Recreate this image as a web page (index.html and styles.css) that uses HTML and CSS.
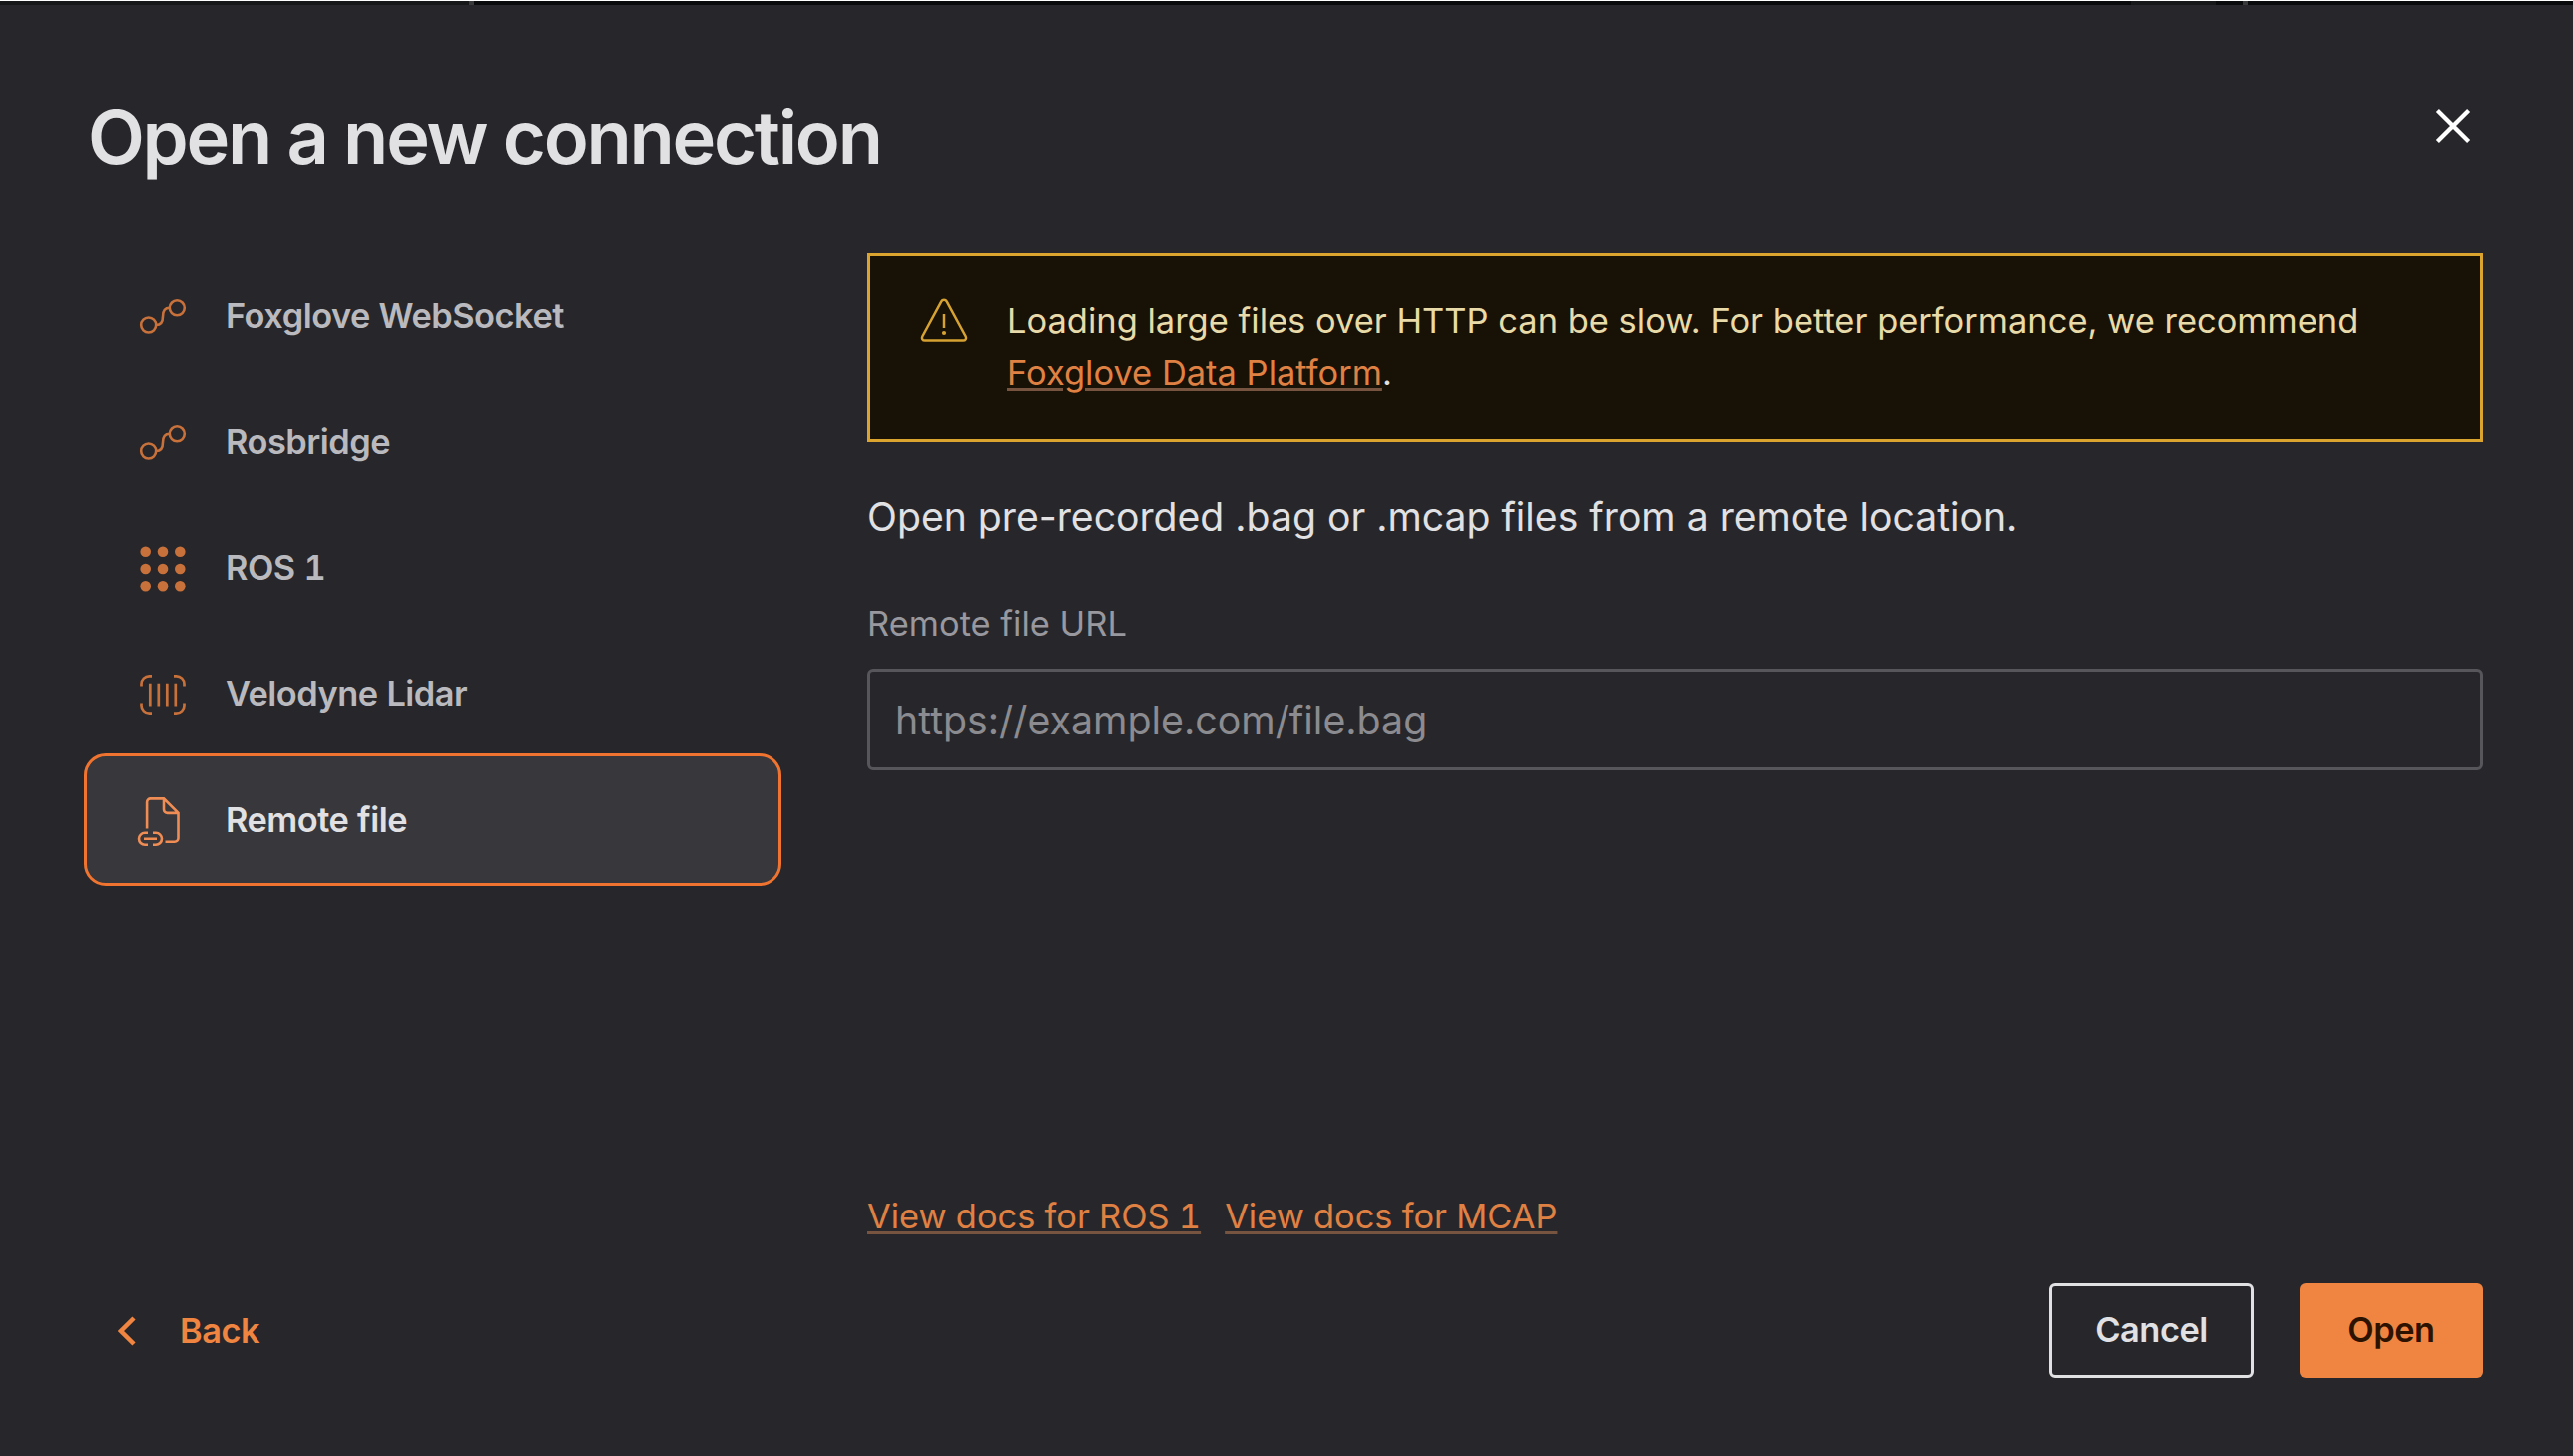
FILE: index.html
```html
<!DOCTYPE html>
<html lang="en">
<head>
<meta charset="utf-8">
<title>Open a new connection</title>
<link rel="stylesheet" href="styles.css">
</head>
<body>
<div class="backdrop"><span class="pane pane-left"></span><span class="pane pane-main"></span><span class="pane pane-tab"></span><span class="pane pane-gap"></span><span class="pane pane-right"></span></div>
<main class="dialog">
  <header class="header">
    <h1 class="title">Open a new connection</h1>
    <button class="close" aria-label="Close"><svg width="36" height="36" viewBox="0 0 36 36"><path d="M2.400 2.400 33.600 33.600M33.600 2.400 2.400 33.600" stroke="#fff" stroke-width="4.300" fill="none"/></svg></button>
  </header>
  <div class="body">
    <nav class="sources">
      <button class="source"><svg class="icon" viewBox="0 0 48 48"><g fill="none" stroke="currentColor" stroke-width="2.6"><circle cx="9.7" cy="33" r="7.5"/><circle cx="38.3" cy="15.8" r="7.5"/><path d="M17.3 33C22 33 24 30 24 24.4S26 15.8 30.7 15.8"/></g></svg><span>Foxglove WebSocket</span></button>
      <button class="source"><svg class="icon" viewBox="0 0 48 48"><g fill="none" stroke="currentColor" stroke-width="2.6"><circle cx="9.7" cy="33" r="7.5"/><circle cx="38.3" cy="15.8" r="7.5"/><path d="M17.3 33C22 33 24 30 24 24.4S26 15.8 30.7 15.8"/></g></svg><span>Rosbridge</span></button>
      <button class="source"><svg class="icon" viewBox="0 0 48 48"><g fill="currentColor"><circle cx="6.7" cy="7.8" r="5.3"/><circle cx="24" cy="7.8" r="5.3"/><circle cx="41.3" cy="7.8" r="5.3"/><circle cx="6.7" cy="25" r="5.3"/><circle cx="24" cy="25" r="5.3"/><circle cx="41.3" cy="25" r="5.3"/><circle cx="6.7" cy="42.2" r="5.3"/><circle cx="24" cy="42.2" r="5.3"/><circle cx="41.3" cy="42.2" r="5.3"/></g></svg><span>ROS 1</span></button>
      <button class="source"><svg class="icon" viewBox="0 0 48 48"><path transform="translate(0 .5)" d="M13 5.800H10.500A8 8 0 0 0 2.500 13.800V16M35 5.800H37.500A8 8 0 0 1 45.500 13.800V16M2.500 33V35.200A8 8 0 0 0 10.500 43.200H13M45.500 33V35.200A8 8 0 0 1 37.500 43.200H35M11.300 13.200V36M19.800 13.200V36M28.300 13.200V36M36.800 13.200V36" fill="none" stroke="currentColor" stroke-width="2.700"/></svg><span>Velodyne Lidar</span></button>
      <button class="source selected"><svg class="icon" viewBox="0 0 48 48"><g transform="translate(-.5 .8)" fill="none" stroke="currentColor" stroke-width="2.600"><path d="M8.600 31.800V5.200A3.600 3.600 0 0 1 12.200 1.600H25.500L40 16.100V41.300A3.600 3.600 0 0 1 36.400 44.900H27M25.500 1.600V12.500A3.600 3.600 0 0 0 29.100 16.100H40"/><path d="M9.500 36H6.500A6 6 0 0 0 6.500 48H9.500M14.500 36H17.500A6 6 0 0 1 17.500 48H14.500M5.500 42H18.500"/></g></svg><span>Remote file</span></button>
    </nav>
    <section class="content">
      <div class="alert">
        <svg class="alert-icon" viewBox="0 0 48 48"><path d="M21.300 4.300 2.300 39.500C1.200 41.600 2.500 43.600 4.900 43.600H43.100C45.500 43.600 46.800 41.600 45.700 39.500L26.700 4.300C25.500 2.100 22.500 2.100 21.300 4.300Z" fill="none" stroke="currentColor" stroke-width="2.500"/><path d="M24 17V31" stroke="currentColor" stroke-width="2.500"/><circle cx="24" cy="36" r="2.100" fill="currentColor"/></svg>
        <p class="alert-text">Loading large files over HTTP can be slow. For better performance, we recommend <a class="link">Foxglove Data Platform</a><span class="stop">.</span></p>
      </div>
      <p class="intro">Open pre-recorded .bag or .mcap files from a remote location.</p>
      <label class="label" for="url">Remote file URL</label>
      <input class="input" id="url" type="text" placeholder="https://example.com/file.bag">
      <div class="docs"><a class="link">View docs for ROS 1</a><a class="link">View docs for MCAP</a></div>
    </section>
  </div>
  <footer class="footer">
    <button class="back"><svg width="18" height="30" viewBox="0 0 18 30"><path d="M16 2 3 15 16 28" fill="none" stroke="currentColor" stroke-width="4.500"/></svg><span>Back</span></button>
    <div class="actions"><button class="button cancel">Cancel</button><button class="button open">Open</button></div>
  </footer>
</main>
</body>
</html>
```
FILE: styles.css
```css
* { box-sizing: border-box; }
body { margin: 0; width: 2578px; height: 1459px; overflow: hidden; display: flex; flex-direction: column; background: #27272b; color: #e1e1e4; font-family: Inter, sans-serif; }
button { border: 0; padding: 0; margin: 0; background: none; font: inherit; color: inherit; letter-spacing: inherit; display: flex; align-items: center; }
h1, p { margin: 0; }
.backdrop { height: 5px; border-top: 1px solid #fff; display: flex; flex: none; }
.pane { height: 4px; background: #090b0d; }
.pane-left { width: 475px; background: #17181a; border-right: 5px solid #3a3a3c; }
.pane-main { width: 1660px; }
.pane-tab { width: 85px; background: #17181a; }
.pane-gap { width: 32px; border-right: 5px solid #3a3a3c; }
.pane-right { flex: 1; }
.dialog { flex: 1; display: flex; flex-direction: column; padding: 85px 90px 78px 84px; }
.header { display: flex; justify-content: space-between; height: 164px; }
.title { font-size: 74px; line-height: 95px; font-weight: 600; letter-spacing: -2.25px; padding-left: 4px; }
.close { height: 36px; margin: 18px 12px 0 0; }
.body { display: flex; gap: 86px; height: 991px; }
.sources { width: 699px; display: flex; flex-direction: column; }
.source { height: 126px; padding-left: 55px; gap: 39px; font-size: 34.4px; font-weight: 600; letter-spacing: -0.5px; font-variant-numeric: tabular-nums; color: #b9b9be; }
.source span { padding-bottom: 1px; }
.icon { width: 48px; height: 48px; color: #c9713b; flex: none; overflow: visible; }
.selected { height: 133px; margin-top: -3px; padding-left: 52px; border: 3px solid #f0742f; border-radius: 22px; background: #38373b; color: #e1e1e4; }
.selected .icon { color: #ef8d55; }
.content { flex: 1; display: flex; flex-direction: column; }
.alert { height: 189px; display: flex; gap: 39px; padding: 39px 50px 0; border: 3px solid #daa42f; background: #181105; color: #e8dba9; }
.alert-icon { width: 48px; height: 48px; margin-top: 2px; flex: none; color: #d6a232; }
.alert-text { font-size: 34.48px; line-height: 52px; }
.stop { color: #e1e1e4; }
.link { color: #e08144; text-decoration: underline; text-decoration-color: #77543f; text-decoration-thickness: 3px; text-underline-offset: 3px; }
.intro { font-size: 39.15px; line-height: 60px; margin-top: 45px; }
.label { font-size: 34.48px; line-height: 52px; margin-top: 51px; color: #98989e; }
.input { height: 102px; margin-top: 19px; padding: 0 25px; border: 3px solid #56565b; border-radius: 6px; background: transparent; font: 39.3px Inter, sans-serif; }
.input::placeholder { color: #8b8b90; }
.docs { display: flex; gap: 24px; margin-top: auto; font-size: 34.4px; line-height: 52px; font-variant-numeric: tabular-nums; }
.footer { display: flex; justify-content: space-between; margin-top: auto; height: 95px; }
.back { gap: 44px; padding-left: 34px; font-size: 34.4px; font-weight: 600; letter-spacing: -0.5px; color: #ef8540; }
.back span { padding-bottom: 1px; }
.actions { display: flex; gap: 46px; }
.button { height: 95px; justify-content: center; border-radius: 6px; font-size: 34.4px; font-weight: 600; letter-spacing: -0.5px; padding-bottom: 2px; }
.cancel { width: 205px; border: 3px solid #e1e1e4; }
.open { width: 184px; background: #ef8540; color: #2e1200; }
```
